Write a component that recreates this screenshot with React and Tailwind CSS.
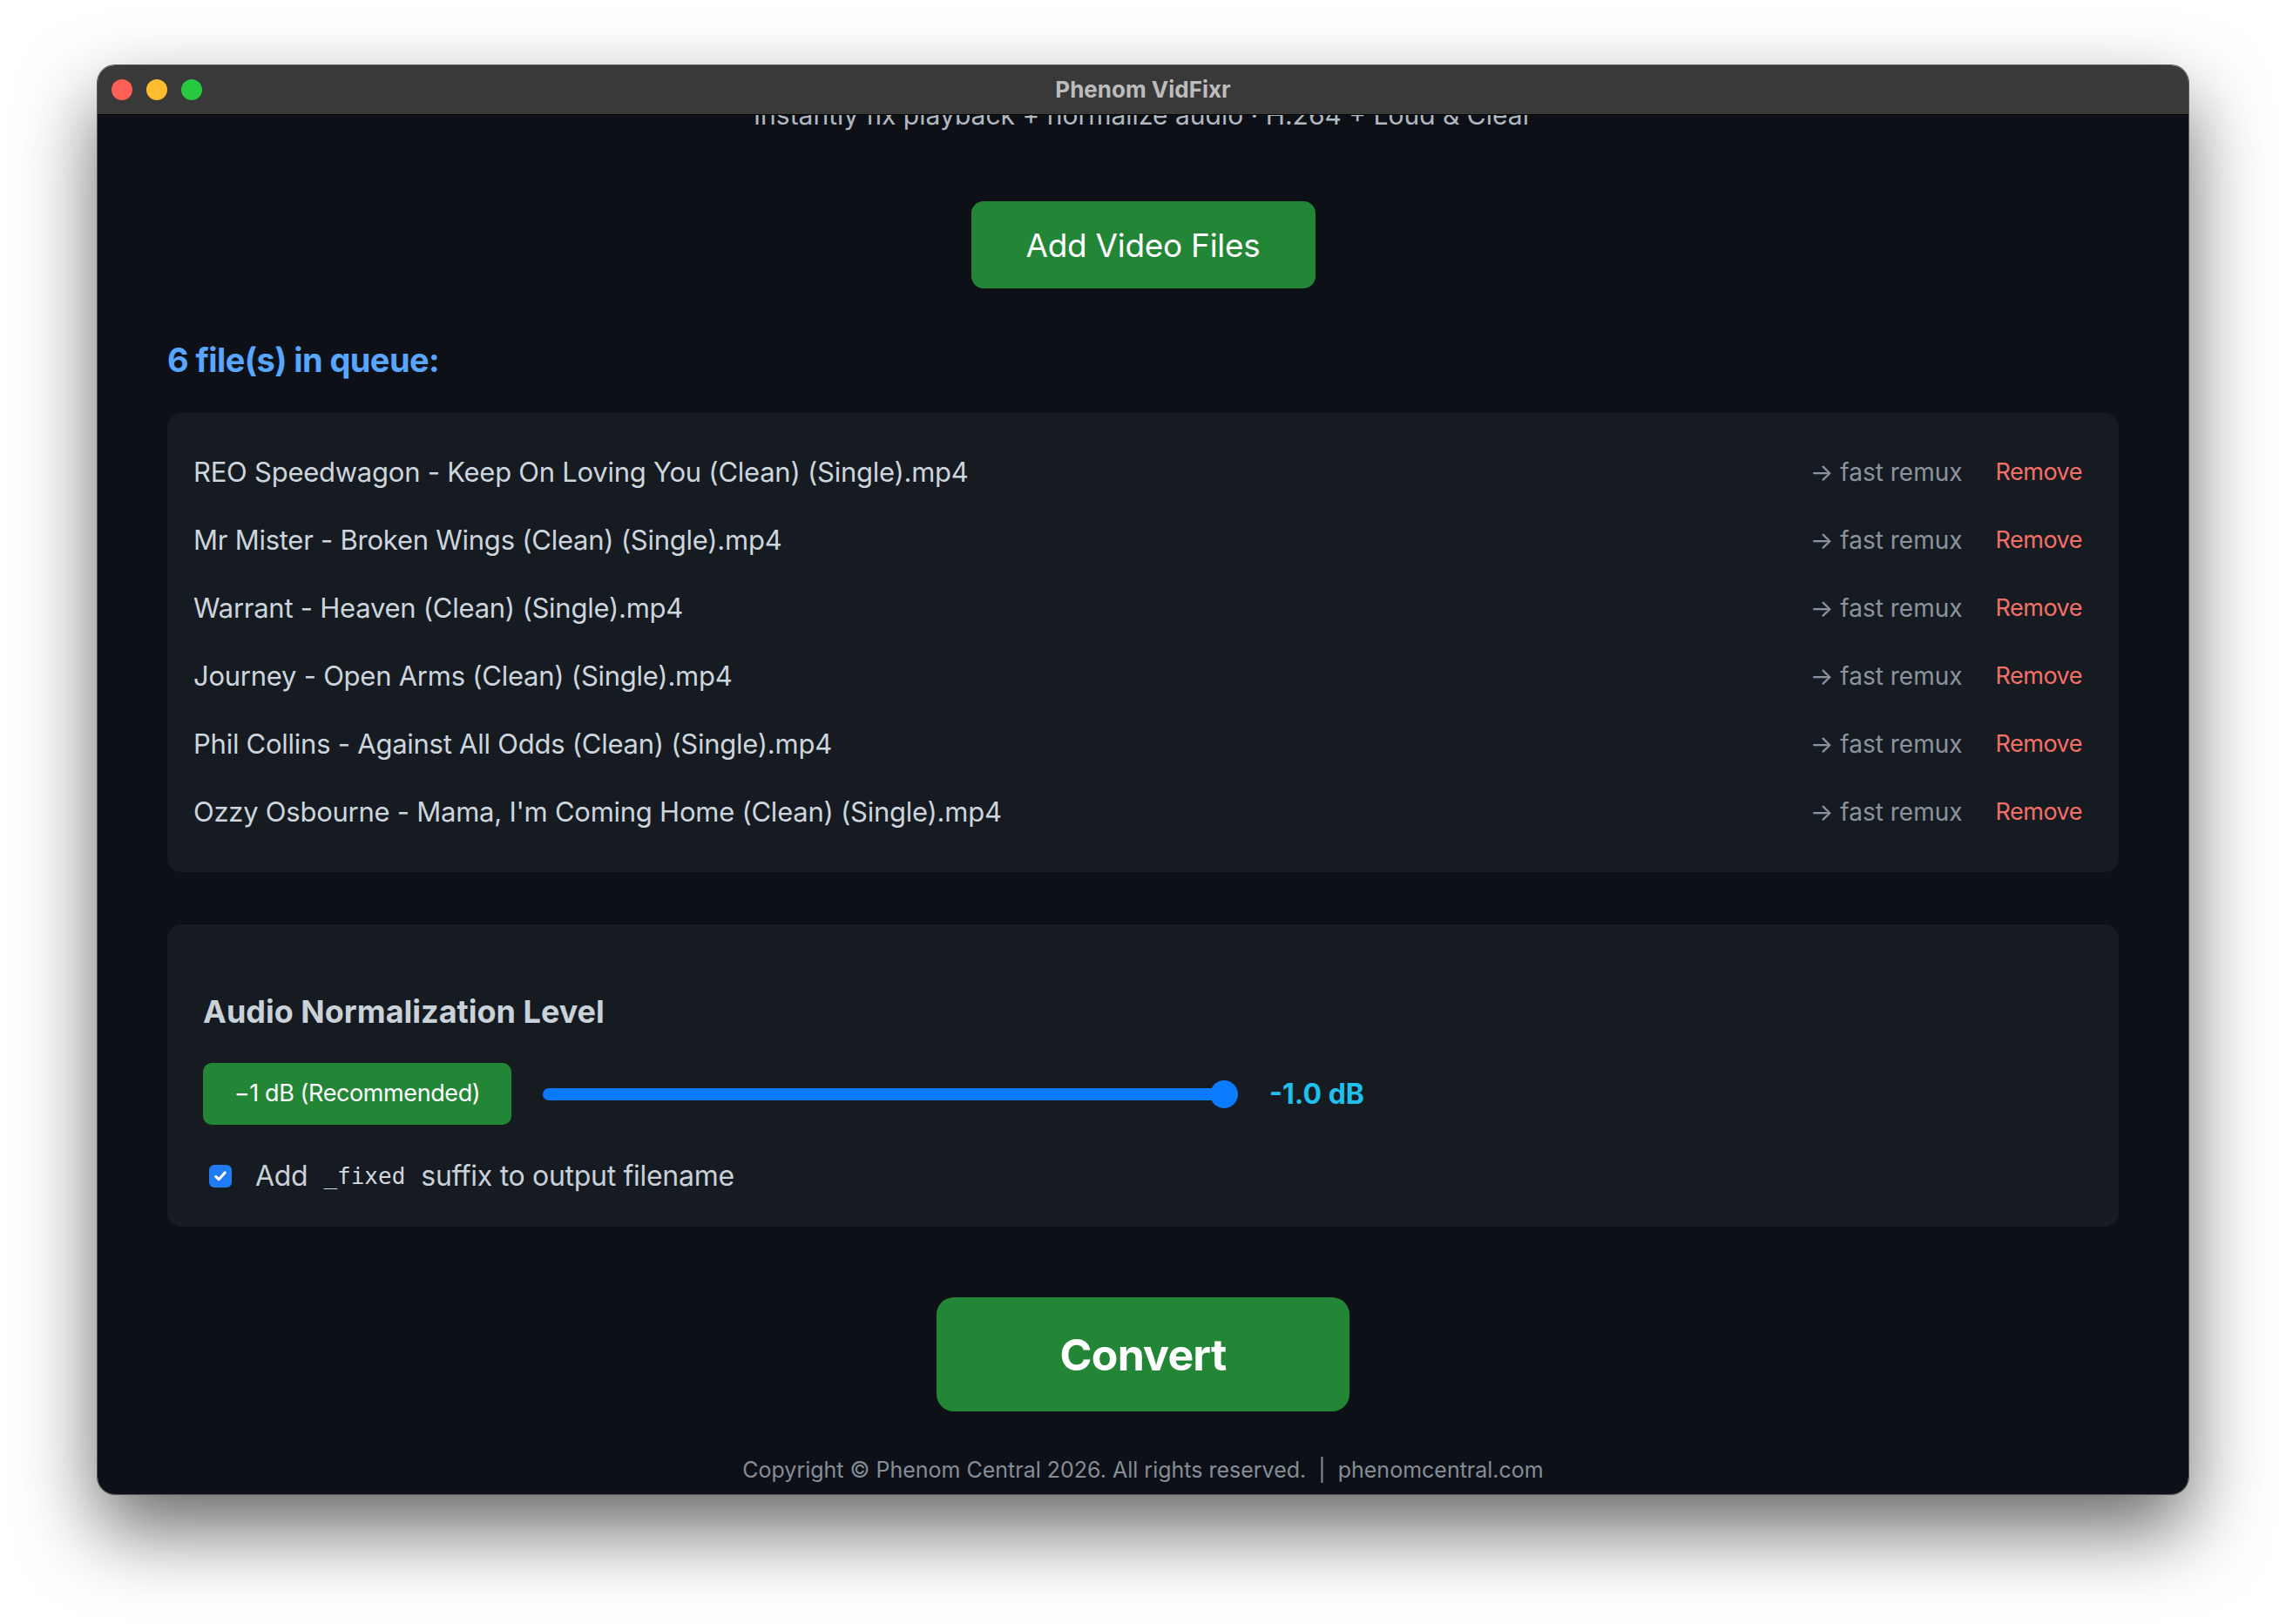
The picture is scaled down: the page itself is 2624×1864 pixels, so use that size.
import React from "react";

const files = [
  "REO Speedwagon - Keep On Loving You (Clean) (Single).mp4",
  "Mr Mister - Broken Wings (Clean) (Single).mp4",
  "Warrant - Heaven (Clean) (Single).mp4",
  "Journey - Open Arms (Clean) (Single).mp4",
  "Phil Collins - Against All Odds (Clean) (Single).mp4",
  "Ozzy Osbourne - Mama, I'm Coming Home (Clean) (Single).mp4",
];

export default function App() {
  return (
    <div className="w-[2624px] h-[1864px] bg-white pt-[75px] pl-[112px] font-['Inter',sans-serif] overflow-hidden">
      <div className="w-[2400px] h-[1640px] rounded-[20px] overflow-hidden flex flex-col shadow-[0_40px_90px_rgba(0,0,0,0.6)] ring-1 ring-[#5a5a5a]">
        {/* Title bar */}
        <div className="h-[57px] shrink-0 bg-[#393939] border-b border-black grid grid-cols-[1fr_auto_1fr] items-center px-[16px]">
          <div className="flex items-center gap-[16px]">
            <span className="w-[24px] h-[24px] rounded-full bg-[#fe5f57]" />
            <span className="w-[24px] h-[24px] rounded-full bg-[#febc2e]" />
            <span className="w-[24px] h-[24px] rounded-full bg-[#28c840]" />
          </div>
          <div className="text-[26px] font-bold text-[#bdbdbd] leading-none">Phenom VidFixr</div>
          <div />
        </div>

        {/* Content */}
        <div className="flex-1 bg-[#0d1117] overflow-hidden">
          <div className="px-[80px] flex flex-col items-center -mt-[18px]">
            <p className="text-[30px] leading-[36px] text-[#b1b8c0] text-center">
              Instantly fix playback + normalize audio · H.264 + Loud &amp; Clear
            </p>

            <button className="mt-[81px] w-[395px] h-[100px] rounded-[14px] bg-[#238636] text-white text-[37px] tracking-[-0.3px] leading-none">
              Add Video Files
            </button>

            <h2 className="self-start mt-[58px] text-[38px] tracking-[-0.6px] leading-[48px] font-bold text-[#58a6ff]">
              6 file(s) in queue:
            </h2>

            <div className="w-full mt-[37px] bg-[#161b22] rounded-[16px] pt-[29px] pb-[30px] px-[30px] flex flex-col">
              {files.map((f) => (
                <div key={f} className="h-[78px] flex items-center justify-between">
                  <span className="text-[31px] tracking-[-0.25px] text-[#cdd5dd]">{f}</span>
                  <div className="flex items-center gap-[26px]">
                    <span className="text-[28px] text-[#8b949e]">→ fast remux</span>
                    <button className="px-[12px] text-[27px] tracking-[-0.5px] text-[#f47067]">Remove</button>
                  </div>
                </div>
              ))}
            </div>

            <div className="w-full mt-[60px] bg-[#161b22] rounded-[16px] pt-[78px] pb-[38px] px-[41px] flex flex-col">
              <h3 className="text-[36px] leading-[44px] font-bold text-[#c9d1d9]">Audio Normalization Level</h3>
              <div className="mt-[37px] flex items-center gap-[36px]">
                <button className="w-[354px] h-[71px] rounded-[10px] bg-[#238636] text-white text-[27px] tracking-[-0.4px]">
                  −1 dB (Recommended)
                </button>
                <div className="relative w-[798px] h-[32px] flex items-center">
                  <div className="w-[782px] h-[14px] rounded-full bg-[#0a7aff]" />
                  <div className="absolute right-0 top-0 w-[32px] h-[32px] rounded-full bg-[#0a7aff]" />
                </div>
                <span className="text-[32px] font-bold text-[#1fc0ec]">-1.0 dB</span>
              </div>
              <div className="mt-[39px] h-[40px] flex items-center">
                <span className="ml-[7px] w-[26px] h-[26px] rounded-[6px] bg-[#1f7cf5] flex items-center justify-center">
                  <svg width="18" height="18" viewBox="0 0 24 24" fill="none" stroke="white" strokeWidth="4" strokeLinecap="round" strokeLinejoin="round">
                    <path d="M5 12.5l4.5 4.5L19 6.5" />
                  </svg>
                </span>
                <span className="ml-[27px] text-[32px] tracking-[-0.3px] text-[#c9d1d9] flex items-center">
                  <span>Add</span>
                  <code className="mx-[18px] text-[26px] tracking-normal font-['DejaVu_Sans_Mono',monospace] text-[#d0d7de]">_fixed</code>
                  <span>suffix to output filename</span>
                </span>
              </div>
            </div>

            <button className="mt-[81px] w-[474px] h-[131px] rounded-[20px] bg-[#238636] text-white text-[50px] tracking-[-0.8px] font-bold leading-none">
              Convert
            </button>

            <p className="mt-[52px] text-[25px] leading-[30px] text-[#858d97] whitespace-pre">
              {"Copyright © Phenom Central 2026. All rights reserved.  |  phenomcentral.com"}
            </p>
          </div>
        </div>
      </div>
    </div>
  );
}
